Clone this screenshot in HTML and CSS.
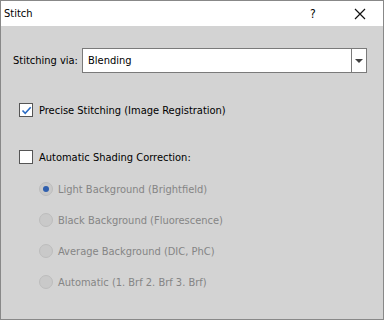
FILE: index.html
```html
<!DOCTYPE html>
<html lang="en">
<head>
    <meta charset="UTF-8">
    <title>Stitch</title>
    <link rel="stylesheet" href="styles.css">
</head>
<body>
    <div class="window">
        <div class="titlebar">
            <span class="title">Stitch</span>
            <span class="help">?</span>
            <span class="close">
                <svg width="12" height="12" viewBox="0 0 12 12"><path d="M1 1L11 11M11 1L1 11" stroke="#111" stroke-width="1.2" fill="none"/></svg>
            </span>
        </div>

        <div class="content">
            <div class="field-row">
                <span class="field-label">Stitching via:</span>
                <div class="select">
                    <span class="select-value">Blending</span>
                    <span class="select-button"><span class="arrow"></span></span>
                </div>
            </div>

            <div class="check-row first">
                <span class="checkbox checked">
                    <svg width="11" height="11" viewBox="0 0 11 11"><path d="M1.5 5.5L4.2 8.3L9.7 2.2" stroke="#2b6cc4" stroke-width="1.6" fill="none"/></svg>
                </span>
                <span class="check-text">Precise Stitching (Image Registration)</span>
            </div>

            <div class="check-row">
                <span class="checkbox"></span>
                <span class="check-text">Automatic Shading Correction:</span>
            </div>

            <div class="radio-group">
                <div class="radio-row"><span class="radio selected"></span><span class="radio-text">Light Background (Brightfield)</span></div>
                <div class="radio-row"><span class="radio"></span><span class="radio-text">Black Background (Fluorescence)</span></div>
                <div class="radio-row"><span class="radio"></span><span class="radio-text">Average Background (DIC, PhC)</span></div>
                <div class="radio-row"><span class="radio"></span><span class="radio-text">Automatic (1. Brf 2. Brf 3. Brf)</span></div>
            </div>
        </div>
    </div>
</body>
</html>
```

FILE: styles.css
```css
* {
    margin: 0;
    padding: 0;
    box-sizing: border-box;
}

body {
    font-family: 'DejaVu Sans Condensed', 'Liberation Sans', sans-serif;
    font-size: 11px;
    color: #000;
    background-color: #d3d3d3;
}

.window {
    width: 384px;
    height: 320px;
    border: 1px solid #888;
    background-color: #d3d3d3;
    display: flex;
    flex-direction: column;
}

.titlebar {
    height: 25px;
    background-color: #fff;
    display: flex;
    align-items: center;
}

.title {
    padding-left: 3px;
    flex: 1;
}

.help {
    width: 10px;
    margin-right: 34px;
    font-size: 12px;
}

.close {
    display: flex;
    margin-right: 17px;
}

.content {
    padding: 22px 16px 0 12px;
    display: flex;
    flex-direction: column;
}

.field-row {
    display: flex;
    align-items: center;
    height: 25px;
}

.field-label {
    width: 69px;
}

.select {
    flex: 1;
    height: 25px;
    background-color: #fff;
    border: 1px solid #7a7a7a;
    display: flex;
    align-items: center;
}

.select-value {
    flex: 1;
    padding-left: 5px;
}

.select-button {
    width: 15px;
    height: 100%;
    border-left: 1px solid #7a7a7a;
    display: flex;
    align-items: center;
    justify-content: center;
}

.arrow {
    width: 0;
    height: 0;
    border-left: 4px solid transparent;
    border-right: 4px solid transparent;
    border-top: 4px solid #404040;
}

.check-row {
    display: flex;
    align-items: center;
    height: 20px;
    margin-top: 27px;
    padding-left: 6px;
}

.checkbox {
    width: 14px;
    height: 14px;
    border: 1px solid #555;
    background-color: #fff;
    display: flex;
    align-items: center;
    justify-content: center;
    margin-right: 6px;
}

.radio-group {
    padding-left: 26px;
    margin-top: 1px;
}

.radio-row {
    display: flex;
    align-items: center;
    height: 20px;
    margin-top: 11px;
}

.radio {
    width: 14px;
    height: 14px;
    border-radius: 50%;
    border: 1px solid #bdbdbd;
    background-color: #c9c9c9;
    margin-right: 5px;
    display: flex;
    align-items: center;
    justify-content: center;
}

.radio.selected::after {
    content: "";
    width: 6px;
    height: 6px;
    border-radius: 50%;
    background-color: #2f5fae;
}

.radio-text {
    color: #858585;
}
```
